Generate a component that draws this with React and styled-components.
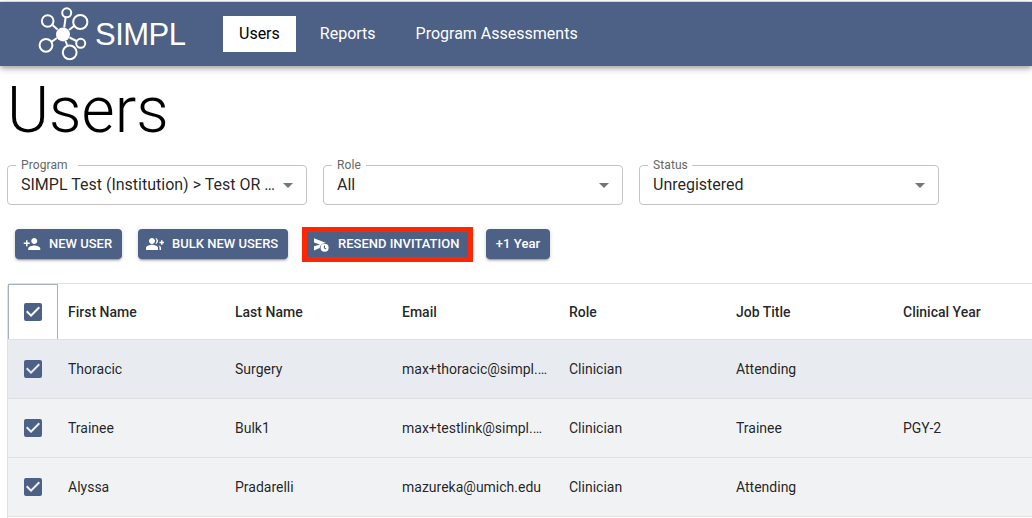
import React from "react";
import styled, { createGlobalStyle } from "styled-components";
import { MdPersonAdd, MdGroupAdd, MdArrowDropDown, MdCheckBox } from "react-icons/md";

const filters = [
  { label: "Program", value: "SIMPL Test (Institution) > Test OR …", notch: 62 },
  { label: "Role", value: "All", notch: 34 },
  { label: "Status", value: "Unregistered", notch: 44 },
];

const columns = ["First Name", "Last Name", "Email", "Role", "Job Title", "Clinical Year"];

const users = [
  ["Thoracic", "Surgery", "max+thoracic@simpl.…", "Clinician", "Attending", ""],
  ["Trainee", "Bulk1", "max+testlink@simpl.…", "Clinician", "Trainee", "PGY-2"],
  ["Alyssa", "Pradarelli", "mazureka@umich.edu", "Clinician", "Attending", ""],
];

function Logo() {
  return (
    <svg width="52" height="54" viewBox="0 0 52 54" fill="none" stroke="#fff" strokeWidth="2">
      <path d="M26.2 20.5 27.7 10M19.5 22.5 14.5 18M31 23 36 19M19 31 13.7 34.6M31.5 30.5 38.5 34M27.5 34 29.3 38.5" />
      <circle cx="25" cy="27.4" r="7" fill="#fff" stroke="none" />
      <circle cx="28.7" cy="5.8" r="4.5" />
      <circle cx="9.7" cy="14" r="5.8" />
      <circle cx="42.3" cy="15" r="7.1" />
      <circle cx="8" cy="38.3" r="6.4" />
      <circle cx="42.7" cy="36.3" r="4.5" />
      <circle cx="31.7" cy="45.3" r="6.9" />
    </svg>
  );
}

// paper plane with a small clock over its corner
function ResendIcon() {
  return (
    <svg viewBox="0 0 18 18">
      <path
        fill="currentColor"
        d="M2 3.2 14.2 8.1C10.6 8 8 10.2 7.7 13.1L2 15.5V11.2L8 9.4 2 7.6z"
      />
      <circle cx="12.6" cy="12.7" r="4" fill="currentColor" />
      <path d="M12.4 10.5V13l1.8 1.1" fill="none" stroke="#4d6085" strokeWidth="1.1" />
    </svg>
  );
}

function App() {
  return (
    <>
      <GlobalStyle />
      <NavBar>
        <Brand>
          <Logo />
          <BrandName>SIMPL</BrandName>
        </Brand>
        <NavItem $active>Users</NavItem>
        <NavItem>Reports</NavItem>
        <NavItem>Program Assessments</NavItem>
      </NavBar>
      <Main>
        <Title>Users</Title>
        <Filters>
          {filters.map((f) => (
            <Select key={f.label}>
              <Legend $width={f.notch}>{f.label}</Legend>
              <SelectRow>
                <SelectValue>{f.value}</SelectValue>
                <MdArrowDropDown />
              </SelectRow>
            </Select>
          ))}
        </Filters>
        <Actions>
          <Button $width={107}>
            <MdPersonAdd />
            NEW USER
          </Button>
          <Button $width={150}>
            <MdGroupAdd />
            BULK NEW USERS
          </Button>
          <Highlight>
            <ResendIcon />
            RESEND INVITATION
          </Highlight>
          <Button $width={64} $plain>
            +1 Year
          </Button>
        </Actions>
        <Grid>
          <HeaderRow>
            <CheckCell $focused>
              <MdCheckBox />
            </CheckCell>
            {columns.map((c) => (
              <Cell key={c}>{c}</Cell>
            ))}
          </HeaderRow>
          {users.map((user, i) => (
            <Row key={user[2]} $hover={i === 0}>
              <CheckCell>
                <MdCheckBox />
              </CheckCell>
              {user.map((text, j) => (
                <Cell key={columns[j]}>{text}</Cell>
              ))}
            </Row>
          ))}
        </Grid>
      </Main>
    </>
  );
}

const GlobalStyle = createGlobalStyle`
  * {
    box-sizing: border-box;
  }
  body {
    margin: 0;
    background-color: #fff;
    color: rgba(0, 0, 0, 0.87);
    font-family: Roboto, "Liberation Sans", sans-serif;
  }
  #root {
    display: flow-root;
  }
`;

const NavBar = styled.nav`
  display: flex;
  align-items: center;
  height: 64px;
  margin-top: 2px;
  padding-left: 38px;
  background-color: #4d6085;
  box-shadow: 0 2px 4px -1px rgba(0, 0, 0, 0.2), 0 4px 5px rgba(0, 0, 0, 0.14),
    0 1px 10px rgba(0, 0, 0, 0.12), 0 -1px 0 #e2e2e2;
`;

const Brand = styled.div`
  display: flex;
  align-items: center;
  width: 185px;
`;

const BrandName = styled.span`
  margin-left: 5px;
  padding-top: 1px;
  color: #fff;
  font-family: "Liberation Sans", Arial, sans-serif;
  font-size: 31px;
  line-height: 36px;
  letter-spacing: -0.5px;
`;

const NavItem = styled.a`
  height: 36px;
  margin-right: 8px;
  padding: 0 16px;
  background-color: ${({ $active }) => ($active ? "#fff" : "transparent")};
  color: ${({ $active }) => ($active ? "#000" : "#fff")};
  font-size: 16px;
  line-height: 36px;
`;

const Main = styled.main`
  padding: 8px 0 0 7px;
`;

const Title = styled.h1`
  margin: 0;
  color: #000;
  font-size: 64px;
  font-weight: 300;
  line-height: 74px;
`;

const Filters = styled.div`
  display: flex;
  gap: 16px;
  margin-top: 10px;
`;

const Select = styled.fieldset`
  width: 300px;
  min-width: 0;
  height: 47px;
  margin: 0;
  padding: 0 6px 0 8px;
  border: 1px solid #c4c4c4;
  border-radius: 4px;
  svg {
    flex: none;
    width: 24px;
    height: 24px;
    color: #757575;
  }
`;

const Legend = styled.legend`
  width: ${({ $width }) => $width}px;
  height: 14px;
  padding: 0 0 0 5px;
  color: #666;
  font-size: 12px;
  line-height: 14px;
  letter-spacing: 0.1px;
`;

const SelectRow = styled.div`
  display: flex;
  align-items: center;
  height: 25px;
  padding-left: 5px;
`;

const SelectValue = styled.span`
  flex: 1;
  min-width: 0;
  font-size: 16px;
  line-height: 23px;
  white-space: nowrap;
`;

const Actions = styled.div`
  display: flex;
  align-items: center;
  height: 36px;
  margin: 21px 0 0 8px;
`;

const Button = styled.button`
  display: flex;
  align-items: center;
  justify-content: ${({ $plain }) => ($plain ? "center" : "flex-start")};
  gap: 8px;
  width: ${({ $width }) => $width}px;
  height: 30px;
  margin-right: 16px;
  padding: ${({ $plain }) => ($plain ? "0 0 2px" : "0 0 2px 8px")};
  border: none;
  border-radius: 4px;
  background-color: #4d6085;
  box-shadow: 0 3px 1px -2px rgba(0, 0, 0, 0.2), 0 2px 2px rgba(0, 0, 0, 0.14),
    0 1px 5px rgba(0, 0, 0, 0.12);
  color: #fff;
  font-family: inherit;
  font-size: 13px;
  font-weight: 500;
  letter-spacing: ${({ $plain }) => ($plain ? "0.1px" : "0")};
  white-space: nowrap;
  svg {
    flex: none;
    width: 18px;
    height: 18px;
    margin-top: 2px;
  }
`;

const Highlight = styled(Button)`
  width: 171px;
  height: 35px;
  margin: 0 13px 0 -2px;
  padding-left: 5px;
  border: 5px solid #ff2600;
  border-radius: 0;
  box-shadow: none;
`;

const Grid = styled.div`
  height: 235px;
  margin-top: 21px;
  border: 1px solid #e0e0e0;
  border-width: 1px 0 0 1px;
  border-radius: 4px 0 0 0;
`;

const Row = styled.div`
  display: flex;
  height: 59px;
  border-bottom: 1px solid #e0e0e0;
  background-color: ${({ $hover }) => ($hover ? "#e8ebf0" : "#f1f2f4")};
  font-size: 14px;
`;

const HeaderRow = styled(Row)`
  height: 56px;
  background-color: transparent;
  font-weight: 500;
`;

const CheckCell = styled.div`
  display: flex;
  flex: none;
  align-items: center;
  justify-content: center;
  width: 50px;
  border: ${({ $focused }) => ($focused ? "1px solid #a6b0c2" : "none")};
  border-bottom: none;
  svg {
    width: 24px;
    height: 24px;
    color: #4d6085;
  }
`;

const Cell = styled.div`
  flex: 0 0 167px;
  align-self: center;
  padding: 0 10px;
  white-space: nowrap;
  &:last-child {
    flex: 1;
  }
`;

export default App;
